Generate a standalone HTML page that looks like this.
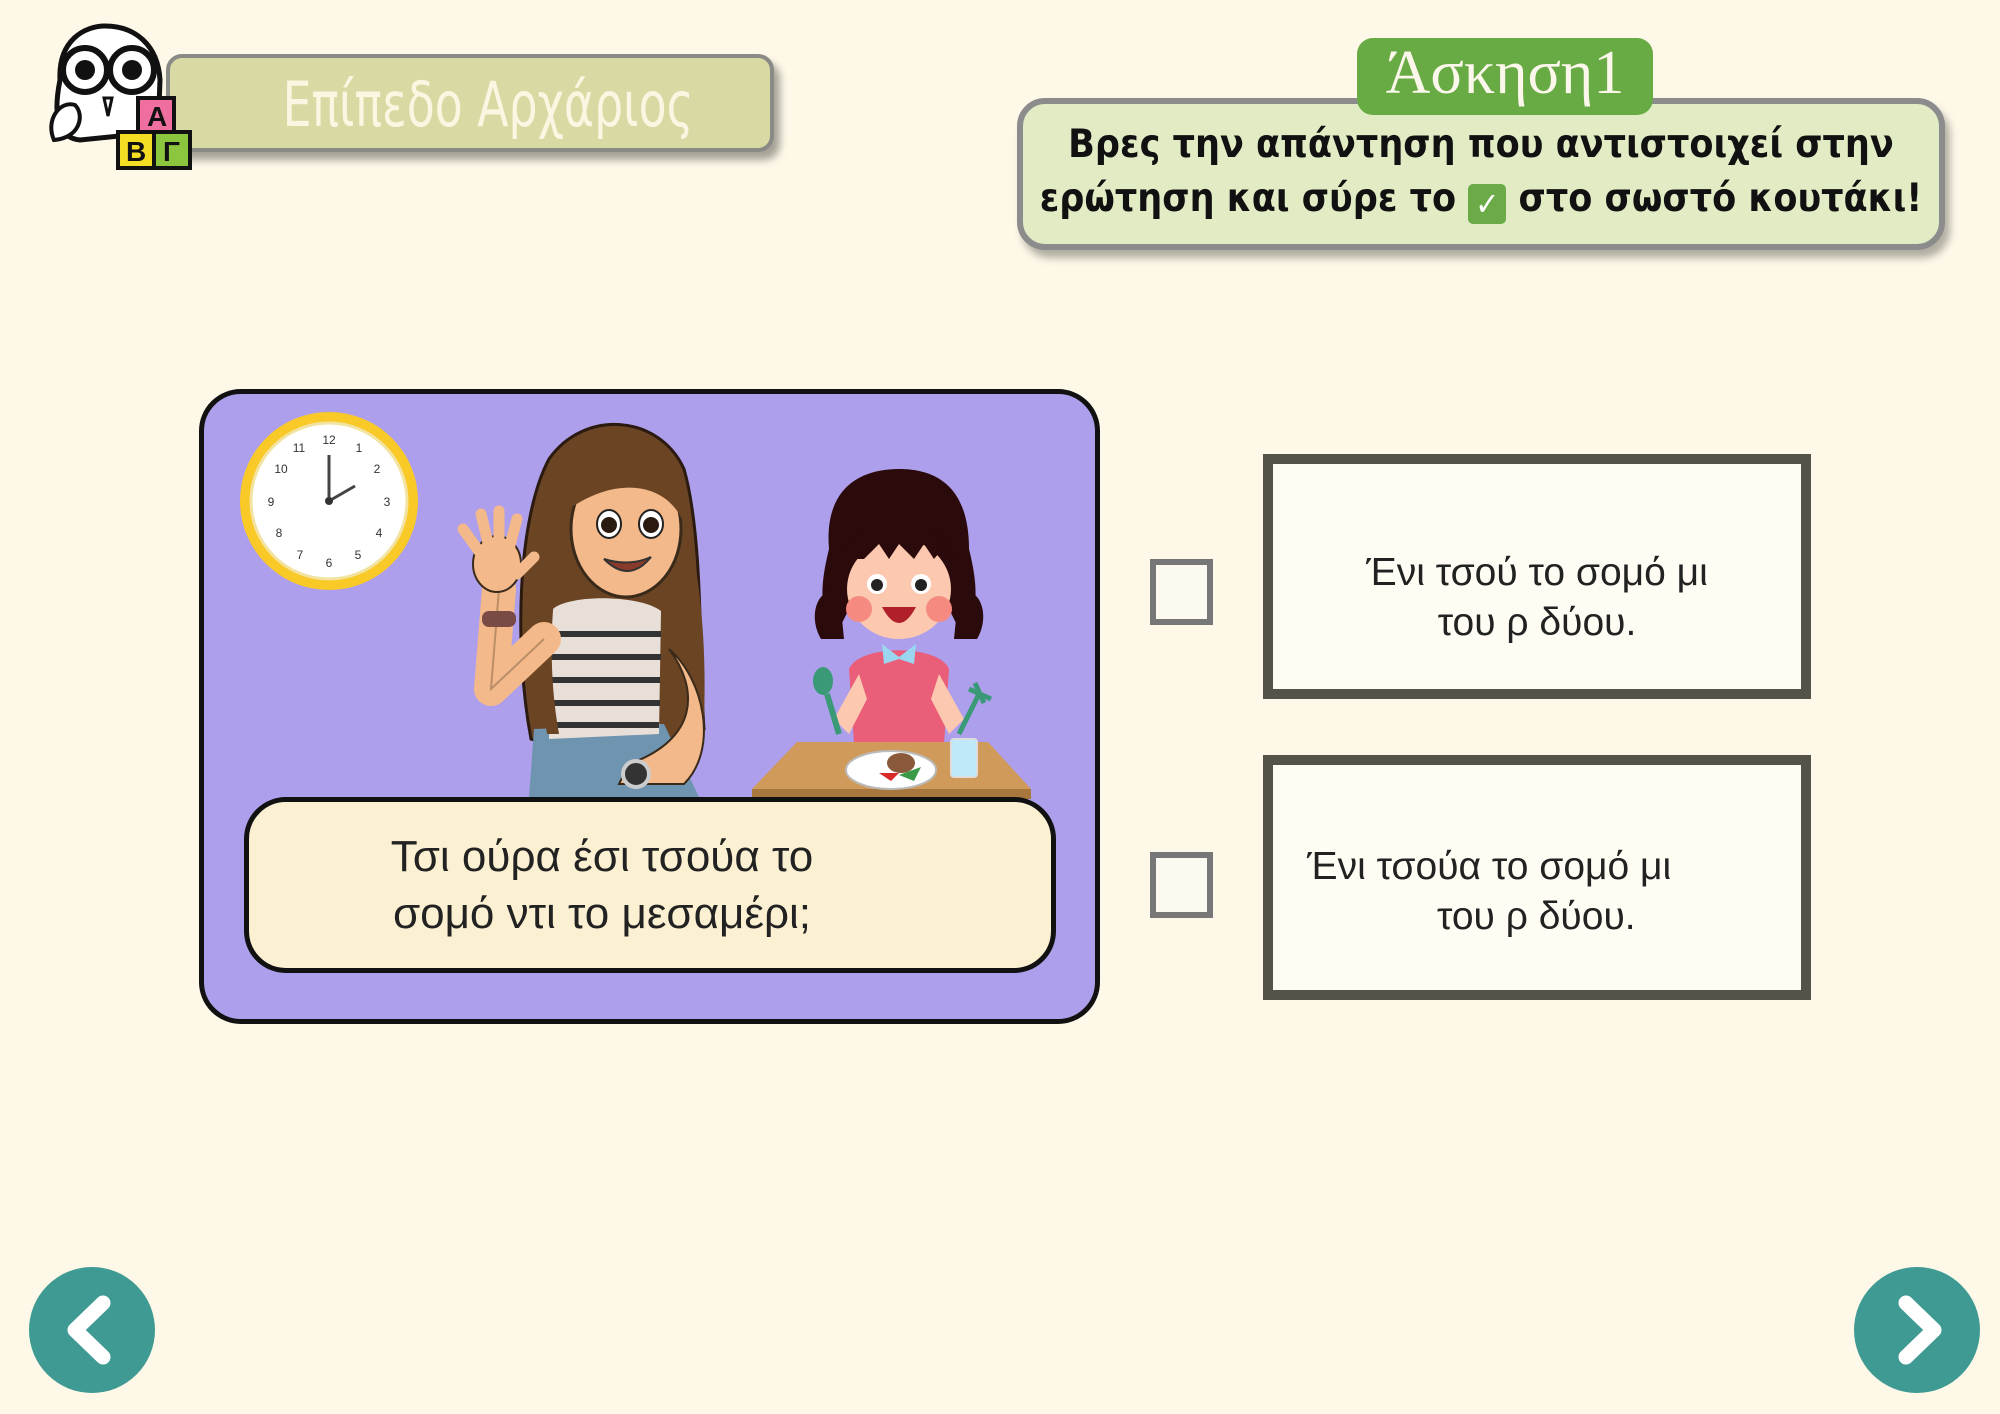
<!DOCTYPE html>
<html><head><meta charset="utf-8"><style>
html,body{margin:0;padding:0}
body{width:2000px;height:1414px;background:#fdf8e8;position:relative;overflow:hidden;font-family:"Liberation Sans","DejaVu Sans",sans-serif}
.abs{position:absolute}
.level{left:166px;top:54px;width:608px;height:98px;background:#d9d9a3;border:4px solid #8a8a86;border-radius:16px;box-shadow:6px 8px 8px rgba(0,0,0,.35);box-sizing:border-box}
.level span{position:absolute;left:36px;right:0;top:10px;text-align:center;color:#fbf6e2;font-size:62px;font-family:"DejaVu Sans Condensed","Liberation Sans Narrow",sans-serif;font-weight:300;transform:scaleX(.82)}
.instr{left:1017px;top:98px;width:928px;height:152px;background:#e1ecc4;border:6px solid #8c8c8c;border-radius:28px;box-sizing:border-box;box-shadow:5px 8px 8px rgba(0,0,0,.3)}
.instr div{position:absolute;left:0;right:0;text-align:center;font-weight:bold;font-size:39px;color:#111;font-family:"DejaVu Sans Condensed","Liberation Sans Narrow",sans-serif;white-space:nowrap}
.tab{left:1357px;top:38px;width:296px;height:77px;background:#68ab45;border-radius:16px;color:#fbf7ea;font-family:"Liberation Serif",serif;font-size:62px;text-align:center;line-height:70px}
.card{left:199px;top:389px;width:901px;height:635px;background:#ae9fec;border:5px solid #111;border-radius:42px;box-sizing:border-box}
.cap{left:244px;top:797px;width:812px;height:176px;background:#fcf0d3;border:5px solid #111;border-radius:42px;box-sizing:border-box}
.cap div{position:absolute;left:0;width:706px;text-align:center;font-size:44px;color:#222;line-height:57px;top:26px}
.cb{width:63px;height:66px;border:6px solid #777;background:#fbf9f0;box-sizing:border-box;left:1150px}
.ans{left:1263px;width:548px;height:245px;border:10px solid #53534a;background:#fffdf3;box-sizing:border-box;font-size:39px;color:#222;line-height:50px}
.nav{width:126px;height:126px;border-radius:50%;background:#3e9a93;top:1267px}
</style></head><body>

<div class="abs level"><span>Επίπεδο Αρχάριος</span></div>
<svg class="abs" style="left:40px;top:20px" width="165" height="158" viewBox="0 0 165 158">
<path d="M20 60 C18 20 45 6 65 6 C95 6 118 25 120 60 L118 112 L40 120 C20 118 12 100 20 60Z" fill="#fff" stroke="#111" stroke-width="5"/>
<circle cx="45" cy="50" r="22" fill="#fff" stroke="#111" stroke-width="6"/><circle cx="45" cy="50" r="10" fill="#111"/>
<circle cx="92" cy="50" r="22" fill="#fff" stroke="#111" stroke-width="6"/><circle cx="92" cy="50" r="10" fill="#111"/>
<path d="M64 78 L72 78 L68 96Z" fill="#fff" stroke="#111" stroke-width="3"/>
<path d="M14 120 C5 100 20 80 35 85 C45 95 40 118 14 120Z" fill="#fff" stroke="#111" stroke-width="4"/>
<rect x="98" y="78" width="36" height="34" fill="#ee6fa0" stroke="#111" stroke-width="4"/><text x="107" y="106" font-size="28" font-weight="bold" fill="#111">Α</text>
<rect x="78" y="112" width="36" height="36" fill="#f4de23" stroke="#111" stroke-width="4"/><text x="86" y="141" font-size="28" font-weight="bold" fill="#111">Β</text>
<rect x="114" y="112" width="36" height="36" fill="#8cc63f" stroke="#111" stroke-width="4"/><text x="123" y="141" font-size="28" font-weight="bold" fill="#111">Γ</text>
</svg>

<div class="abs instr"><div style="top:18px">Βρες την απάντηση που αντιστοιχεί στην</div><div style="top:72px">ερώτηση και σύρε το <span style="display:inline-block;width:38px;height:40px;background:#6aab48;color:#fff;border-radius:5px;line-height:40px;font-size:32px;vertical-align:-4px">✓</span> στο σωστό κουτάκι!</div></div>
<div class="abs tab">Άσκηση1</div>

<div class="abs card"></div>
<svg class="abs" style="left:199px;top:389px" width="901" height="635">
<!-- clock -->
<circle cx="130" cy="112" r="89" fill="#f9c928"/><circle cx="130" cy="112" r="78" fill="#fff" stroke="#f3e3a0" stroke-width="3"/>
<g font-size="12" fill="#333" text-anchor="middle"><text x="130" y="55">12</text><text x="130" y="178">6</text><text x="72" y="117">9</text><text x="188" y="117">3</text><text x="100" y="63">11</text><text x="160" y="63">1</text><text x="82" y="84">10</text><text x="178" y="84">2</text><text x="80" y="148">8</text><text x="180" y="148">4</text><text x="101" y="170">7</text><text x="159" y="170">5</text></g>
<line x1="130" y1="112" x2="130" y2="66" stroke="#444" stroke-width="3"/><line x1="130" y1="112" x2="156" y2="97" stroke="#444" stroke-width="3"/><circle cx="130" cy="112" r="4" fill="#333"/>
<!-- woman hair back -->
<path d="M332 350 C315 260 318 130 350 70 C385 20 460 25 485 80 C505 150 500 280 505 340 L470 360 L360 360Z" fill="#6b4424" stroke="#2a1a10" stroke-width="3"/>
<!-- jeans -->
<path d="M335 340 L465 335 L500 408 L330 408Z" fill="#6f94b0"/>
<!-- torso -->
<path d="M352 222 C365 205 440 205 462 222 L460 345 L350 350Z" fill="#e8e0d8"/>
<g stroke="#333" stroke-width="6"><line x1="352" y1="245" x2="462" y2="245"/><line x1="350" y1="268" x2="462" y2="268"/><line x1="350" y1="291" x2="461" y2="291"/><line x1="350" y1="314" x2="461" y2="314"/><line x1="350" y1="336" x2="460" y2="336"/></g>
<!-- face -->
<ellipse cx="427" cy="140" rx="55" ry="68" fill="#f3b98a" stroke="#3a2a1a" stroke-width="3"/>
<path d="M370 120 C372 70 420 52 455 75 C478 95 485 120 485 135 C470 95 420 85 370 120Z" fill="#6b4424"/>
<ellipse cx="410" cy="135" rx="12" ry="14" fill="#fff" stroke="#222" stroke-width="2"/><circle cx="410" cy="136" r="8" fill="#2a1a10"/>
<ellipse cx="452" cy="135" rx="12" ry="14" fill="#fff" stroke="#222" stroke-width="2"/><circle cx="452" cy="136" r="8" fill="#2a1a10"/>
<path d="M405 170 Q430 195 452 168 Q430 178 405 170Z" fill="#8a3a2a" stroke="#333" stroke-width="2"/>
<!-- hair front strands -->
<path d="M372 110 C355 180 345 260 360 345 L348 345 C335 260 345 170 372 110Z" fill="#6b4424"/>
<path d="M482 115 C495 180 498 260 495 330 L505 330 C508 250 500 170 482 115Z" fill="#6b4424"/>
<!-- waving arm -->
<path d="M300 200 L292 300 L345 250" fill="none" stroke="#f3b98a" stroke-width="34" stroke-linejoin="round" stroke-linecap="round"/>
<path d="M300 200 L292 300 L345 250" fill="none" stroke="#3a2a1a" stroke-width="2" opacity=".3"/>
<ellipse cx="298" cy="175" rx="24" ry="28" fill="#f3b98a" stroke="#3a2a1a" stroke-width="2"/>
<g stroke="#f3b98a" stroke-width="11" stroke-linecap="round"><line x1="282" y1="165" x2="264" y2="140"/><line x1="290" y1="158" x2="282" y2="125"/><line x1="300" y1="156" x2="300" y2="122"/><line x1="310" y1="160" x2="318" y2="130"/><line x1="318" y1="185" x2="335" y2="168"/></g>
<rect x="283" y="222" width="34" height="16" rx="7" fill="#7a4a44"/>
<!-- right arm -->
<path d="M470 260 C500 300 500 350 430 375 L420 395 L485 395 C520 360 505 290 470 260Z" fill="#f3b98a" stroke="#3a2a1a" stroke-width="2"/>
<circle cx="437" cy="385" r="13" fill="#333" stroke="#ccc" stroke-width="4"/>
<!-- girl -->
<path d="M630 160 C625 100 660 80 700 80 C740 80 770 100 770 160 C780 200 780 230 760 240 L740 200 L660 200 L640 240 C620 230 620 200 630 160Z" fill="#2a0a0a"/>
<path d="M622 250 C610 230 615 200 640 200 L645 250Z" fill="#2a0a0a"/><path d="M778 250 C790 230 785 200 760 200 L755 250Z" fill="#2a0a0a"/>
<path d="M650 280 C660 255 740 255 750 280 L745 355 L655 355Z" fill="#ea5e79"/>
<path d="M660 285 L635 330 L650 345 L668 310Z" fill="#fcc8b0"/><path d="M740 285 L765 330 L750 345 L732 310Z" fill="#fcc8b0"/>
<ellipse cx="700" cy="200" rx="52" ry="50" fill="#fcc8b0"/>
<path d="M645 170 C650 120 750 120 755 170 L745 158 L735 170 L725 155 L715 170 L700 155 L690 170 L680 155 L665 170Z" fill="#2a0a0a"/>
<circle cx="678" cy="195" r="10" fill="#fff"/><circle cx="678" cy="196" r="6" fill="#222"/><circle cx="722" cy="195" r="10" fill="#fff"/><circle cx="722" cy="196" r="6" fill="#222"/>
<circle cx="660" cy="220" r="13" fill="#f48a80"/><circle cx="740" cy="220" r="13" fill="#f48a80"/>
<path d="M683 218 Q700 250 717 218Z" fill="#b0202a"/>
<path d="M683 255 L700 268 L717 255 L715 275 L700 270 L685 275Z" fill="#9ad6f0"/>
<line x1="640" y1="345" x2="628" y2="305" stroke="#3a9a78" stroke-width="6"/><ellipse cx="624" cy="292" rx="10" ry="14" fill="#3a9a78"/>
<path d="M760 345 L780 305 M770 300 L792 310 M776 294 L785 314" stroke="#3a9a78" stroke-width="5" fill="none"/>
<!-- table -->
<path d="M598 353 L789 353 L832 400 L832 410 L553 410 L553 400Z" fill="#cf9a5a"/>
<rect x="553" y="400" width="279" height="10" fill="#a8773e"/>
<ellipse cx="692" cy="381" rx="45" ry="19" fill="#fff" stroke="#bbb" stroke-width="2"/>
<ellipse cx="702" cy="374" rx="14" ry="10" fill="#8a5a3a"/><path d="M680 384 L700 384 L692 392Z" fill="#d92a2a"/><path d="M700 386 L722 378 L715 392Z" fill="#3a9a48"/>
<rect x="752" y="350" width="26" height="38" rx="3" fill="#bfe8f8" stroke="#ddd" stroke-width="2"/>
</svg>
<div class="abs cap"><div>Τσι ούρα έσι τσούα το<br>σομό ντι το μεσαμέρι;</div></div>

<div class="abs cb" style="top:559px"></div>
<div class="abs cb" style="top:852px"></div>
<div class="abs ans" style="top:454px"><div style="position:absolute;left:0;right:0;top:84px;text-align:center">Ένι τσού το σομό μι<br>του ρ δύου.</div></div>
<div class="abs ans" style="top:755px"><div style="position:absolute;left:34px;top:77px">Ένι τσούα το σομό μι</div><div style="position:absolute;left:164px;top:127px">του ρ δύου.</div></div>

<div class="abs nav" style="left:29px"><svg width="126" height="126"><path d="M74 36 L46 63 L74 90" fill="none" stroke="#fff" stroke-width="15" stroke-linecap="round" stroke-linejoin="round"/></svg></div>
<div class="abs nav" style="left:1854px"><svg width="126" height="126"><path d="M52 36 L80 63 L52 90" fill="none" stroke="#fff" stroke-width="15" stroke-linecap="round" stroke-linejoin="round"/></svg></div>
</body></html>
